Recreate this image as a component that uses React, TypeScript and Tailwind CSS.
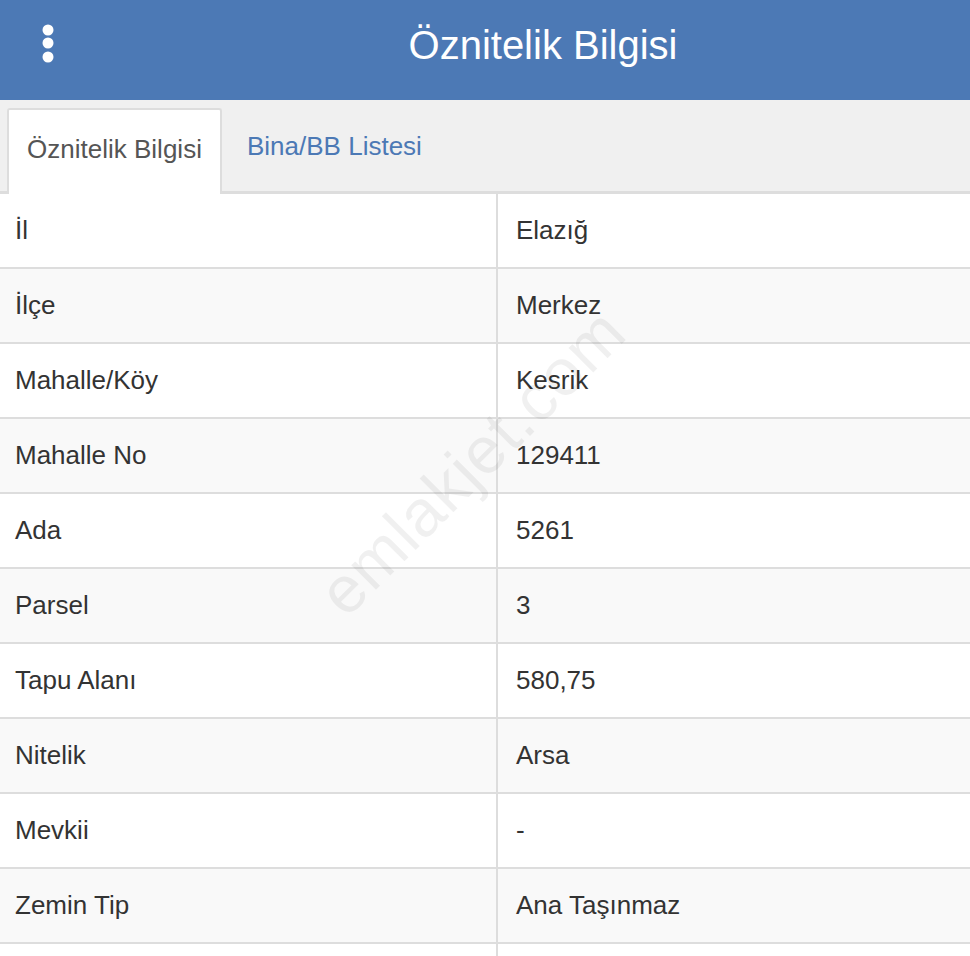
import React from 'react';

const rows: [string, string][] = [
  ['İl', 'Elazığ'],
  ['İlçe', 'Merkez'],
  ['Mahalle/Köy', 'Kesrik'],
  ['Mahalle No', '129411'],
  ['Ada', '5261'],
  ['Parsel', '3'],
  ['Tapu Alanı', '580,75'],
  ['Nitelik', 'Arsa'],
  ['Mevkii', '-'],
  ['Zemin Tip', 'Ana Taşınmaz'],
  ['', ''],
];

export default function App() {
  return (
    <div className="relative h-[956px] w-[970px] overflow-hidden bg-white [font-family:'Liberation_Sans',Arial,sans-serif] text-[#333]">
      {/* header */}
      <div className="flex h-[100px] items-center bg-[#4c79b5]">
        <div className="flex w-[116px] justify-start pl-[42px]">
          <svg width="12" height="40" viewBox="0 0 12 40" className="-mt-[12px]">
            <circle cx="6" cy="6" r="5.5" fill="#fff" />
            <circle cx="6" cy="19" r="5.5" fill="#fff" />
            <circle cx="6" cy="33" r="5.5" fill="#fff" />
          </svg>
        </div>
        <div className="flex-1 text-center text-[40px] leading-none text-white -mt-[10px]">Öznitelik Bilgisi</div>
      </div>

      {/* tabs */}
      <div className="flex h-[94px] items-end border-b-[3px] border-[#dddddd] bg-[#f0f0f0] pl-[7px]">
        <div className="-mb-[3px] flex h-[86px] w-[215px] items-center justify-center rounded-t-[3px] border-x-2 border-t-2 border-[#dddddd] bg-white pb-[5px] text-[26px] text-[#555]">
          Öznitelik Bilgisi
        </div>
        <div className="flex h-[86px] items-center pb-[3px] pl-[25px] text-[26px] text-[#4c79b5]">Bina/BB Listesi</div>
      </div>

      {/* table */}
      <div className="flex flex-col">
        {rows.map(([label, value], i) => (
          <div
            key={i}
            className={`grid h-[75px] grid-cols-[498px_1fr] border-b-2 border-[#dddddd] ${i % 2 === 1 ? 'bg-[#f9f9f9]' : 'bg-white'}`}
          >
            <div className="flex items-center border-r-2 border-[#dddddd] pl-[15px] text-[26px]">{label}</div>
            <div className="flex items-center pl-[18px] text-[26px]">{value}</div>
          </div>
        ))}
      </div>

      {/* watermark */}
      <div className="pointer-events-none absolute left-[472px] top-[462px] -translate-x-1/2 -translate-y-1/2 -rotate-45 whitespace-nowrap text-[66px] tracking-[1px] text-[#000]/[0.06]">
        emlakjet.com
      </div>
    </div>
  );
}
